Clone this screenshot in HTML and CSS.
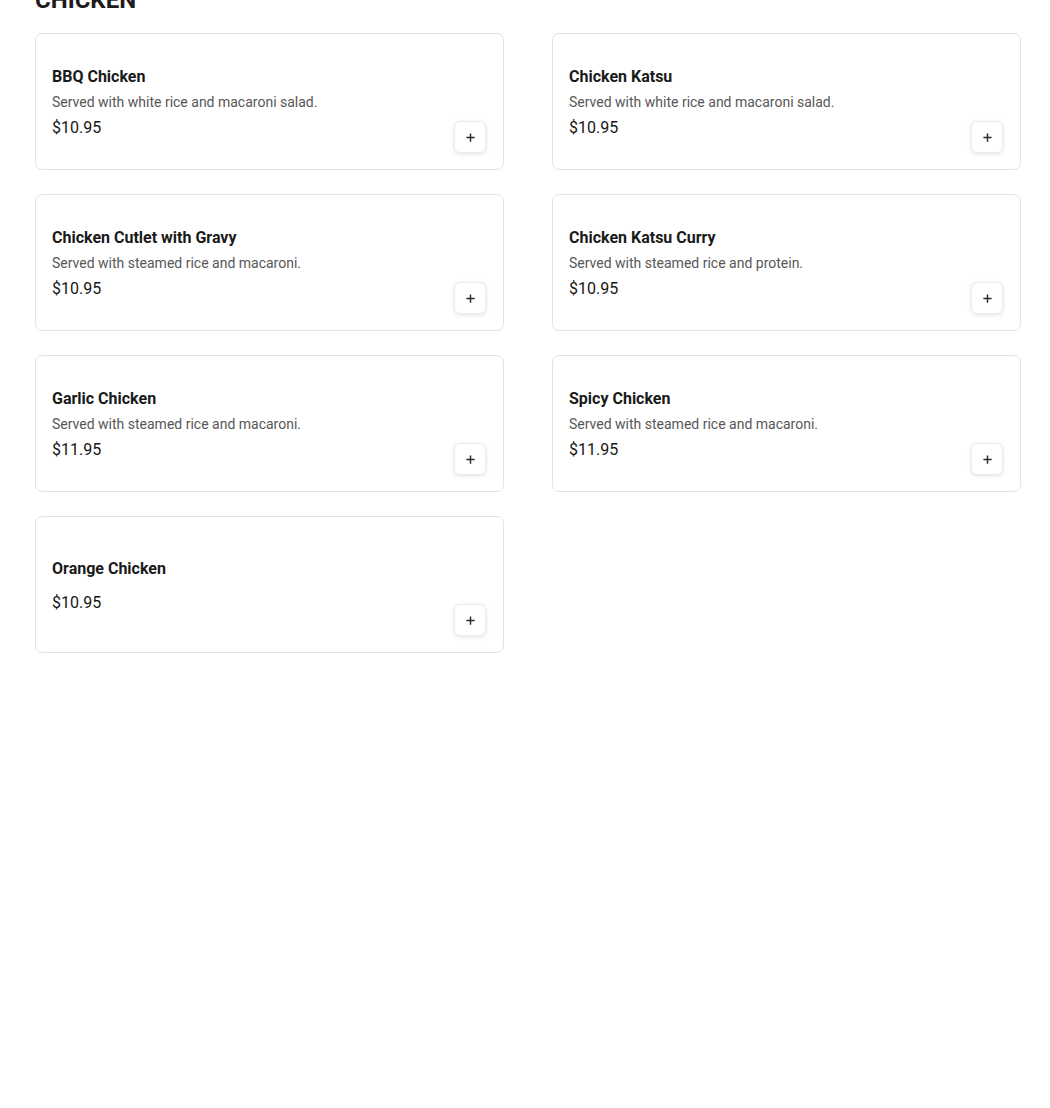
FILE: index.html
```html
<!DOCTYPE html>
<html lang="en">
<head>
<meta charset="utf-8">
<title>Chicken</title>
<link rel="stylesheet" href="styles.css">
</head>
<body>
<main class="page">
  <h2 class="section-title">CHICKEN</h2>
  <div class="grid">
    <div class="card">
      <div class="info">
        <h3 class="name">BBQ Chicken</h3>
        <p class="desc">Served with white rice and macaroni salad.</p>
        <p class="price">$10.95</p>
      </div>
      <button class="add" aria-label="Add"><svg viewBox="0 0 12 12" width="12" height="12"><path d="M6 1.5v9M1.5 6h9" stroke="#2b2b2b" stroke-width="1.6" fill="none"/></svg></button>
    </div>
    <div class="card">
      <div class="info">
        <h3 class="name">Chicken Katsu</h3>
        <p class="desc">Served with white rice and macaroni salad.</p>
        <p class="price">$10.95</p>
      </div>
      <button class="add" aria-label="Add"><svg viewBox="0 0 12 12" width="12" height="12"><path d="M6 1.5v9M1.5 6h9" stroke="#2b2b2b" stroke-width="1.6" fill="none"/></svg></button>
    </div>
    <div class="card">
      <div class="info">
        <h3 class="name">Chicken Cutlet with Gravy</h3>
        <p class="desc">Served with steamed rice and macaroni.</p>
        <p class="price">$10.95</p>
      </div>
      <button class="add" aria-label="Add"><svg viewBox="0 0 12 12" width="12" height="12"><path d="M6 1.5v9M1.5 6h9" stroke="#2b2b2b" stroke-width="1.6" fill="none"/></svg></button>
    </div>
    <div class="card">
      <div class="info">
        <h3 class="name">Chicken Katsu Curry</h3>
        <p class="desc">Served with steamed rice and protein.</p>
        <p class="price">$10.95</p>
      </div>
      <button class="add" aria-label="Add"><svg viewBox="0 0 12 12" width="12" height="12"><path d="M6 1.5v9M1.5 6h9" stroke="#2b2b2b" stroke-width="1.6" fill="none"/></svg></button>
    </div>
    <div class="card">
      <div class="info">
        <h3 class="name">Garlic Chicken</h3>
        <p class="desc">Served with steamed rice and macaroni.</p>
        <p class="price">$11.95</p>
      </div>
      <button class="add" aria-label="Add"><svg viewBox="0 0 12 12" width="12" height="12"><path d="M6 1.5v9M1.5 6h9" stroke="#2b2b2b" stroke-width="1.6" fill="none"/></svg></button>
    </div>
    <div class="card">
      <div class="info">
        <h3 class="name">Spicy Chicken</h3>
        <p class="desc">Served with steamed rice and macaroni.</p>
        <p class="price">$11.95</p>
      </div>
      <button class="add" aria-label="Add"><svg viewBox="0 0 12 12" width="12" height="12"><path d="M6 1.5v9M1.5 6h9" stroke="#2b2b2b" stroke-width="1.6" fill="none"/></svg></button>
    </div>
    <div class="card">
      <div class="info">
        <h3 class="name">Orange Chicken</h3>
        <p class="price">$10.95</p>
      </div>
      <button class="add" aria-label="Add"><svg viewBox="0 0 12 12" width="12" height="12"><path d="M6 1.5v9M1.5 6h9" stroke="#2b2b2b" stroke-width="1.6" fill="none"/></svg></button>
    </div>
  </div>
</main>
</body>
</html>
```

FILE: styles.css
```css
* { box-sizing: border-box; }
html, body { margin: 0; padding: 0; background: #fff; }
body {
  font-family: Roboto, "Liberation Sans", Arial, sans-serif;
  color: #1c1c1c;
}
.page {
  padding: 0 29px 0 35px;
}
.section-title {
  margin: -16px 0 17px 0;
  font-size: 24px;
  line-height: 32px;
  font-weight: 700;
  color: #1c1c1c;
}
.grid {
  display: grid;
  grid-template-columns: repeat(2, 469px);
  column-gap: 48px;
  row-gap: 24px;
}
.card {
  height: 137px;
  border: 1px solid #e3e3e3;
  border-radius: 7px;
  padding: 16px;
  display: flex;
  align-items: center;
  justify-content: space-between;
}
.info {
  display: flex;
  flex-direction: column;
  padding-top: 2px;
}
.name {
  margin: 0;
  font-size: 16px;
  line-height: 24px;
  font-weight: 700;
  color: #1a1a1a;
}
.desc {
  margin: 3px 0 0 0;
  font-size: 14px;
  line-height: 20px;
  color: #575757;
}
.price {
  margin: 4px 0 0 0;
  font-size: 16px;
  line-height: 24px;
  font-weight: 400;
  color: #161616;
}
.name + .price { margin-top: 10px; }
.add {
  align-self: flex-end;
  width: 32px;
  height: 32px;
  margin: 0 1px 0 0;
  padding: 0;
  border: 1px solid #ececec;
  border-radius: 6px;
  background: #fff;
  box-shadow: 0 1px 4px rgba(0, 0, 0, 0.12);
  display: flex;
  align-items: center;
  justify-content: center;
  cursor: pointer;
}
.add svg { display: block; width: 11px; height: 11px; }
```
